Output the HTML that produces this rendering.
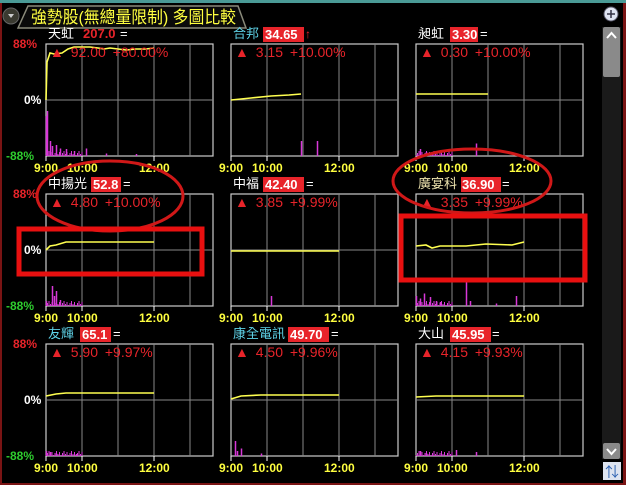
<!DOCTYPE html>
<html><head><meta charset="utf-8"><style>
html,body{margin:0;padding:0;background:#000;width:626px;height:485px;overflow:hidden}
svg{display:block}
text{font-family:"Liberation Sans","Noto Sans CJK TC",sans-serif}
.n{font-size:13px;fill:#fff}
.c{fill:#5fd3e8}
.p{font-size:13px;font-weight:bold;fill:#fff}
.ch{font-size:14px;fill:#e8242a;word-spacing:3px}
.ax{font-size:12px;font-weight:bold}
.t{font-size:12px;font-weight:bold;fill:#ffff40}
</style></head><body>
<svg id="s" width="626" height="485" viewBox="0 0 626 485">
<rect x="0" y="0" width="626" height="485" fill="#000"/>
<rect x="0" y="0" width="626" height="3" fill="#4a9a96"/>
<rect x="0" y="3" width="2" height="482" fill="#7a1414"/>
<rect x="623" y="3" width="3" height="482" fill="#7a1414"/>
<rect x="0" y="483" width="626" height="2" fill="#7a1414"/>
<path d="M18 28 L28 6 L238 6 L246 28 Z" fill="#0a0a0a" stroke="#8a8a7a" stroke-width="1.5"/>
<circle cx="11" cy="16" r="8" fill="#3a3a30" stroke="#666"/>
<path d="M8 14 L14 14 L11 18 Z" fill="#ccc"/>
<text x="31" y="23" font-size="17" fill="#ffff40" textLength="205" lengthAdjust="spacingAndGlyphs">強勢股(無總量限制) 多圖比較</text>
<rect x="602" y="27" width="19" height="432" fill="#1a1a1a"/>
<rect x="603" y="27" width="17" height="50" fill="#8a8a8a" rx="2"/>
<path d="M607 38 L611.5 33 L616 38" stroke="#fff" stroke-width="2" fill="none"/>
<rect x="603" y="443" width="17" height="16" fill="#8a8a8a" rx="2"/>
<path d="M607 449 L611.5 454 L616 449" stroke="#fff" stroke-width="2" fill="none"/>
<rect x="603" y="462" width="18" height="18" fill="#dde4f0"/>
<text x="605" y="477" font-size="14" fill="#2a5fb0">⇅</text>
<circle cx="611" cy="14" r="7" fill="#dfe4f2" stroke="#556"/>
<path d="M607 14 H615 M611 10 V18" stroke="#334" stroke-width="1.5"/>
<g id="g"></g>
<g class="ax">
<text x="13" y="48" fill="#e8242a">88%</text><text x="24" y="104" fill="#fff">0%</text><text x="6" y="160" fill="#2ecc2e">-88%</text>
<text x="13" y="198" fill="#e8242a">88%</text><text x="24" y="254" fill="#fff">0%</text><text x="6" y="310" fill="#2ecc2e">-88%</text>
<text x="13" y="348" fill="#e8242a">88%</text><text x="24" y="404" fill="#fff">0%</text><text x="6" y="460" fill="#2ecc2e">-88%</text>
</g>
<text x="48" y="38" class="n">天虹</text><text x="83" y="38" class="p" style="fill:#e8242a">207.0</text><text x="120" y="38" class="n">=</text>
<text x="233" y="38" class="n c">合邦</text><rect x="263" y="27" width="41" height="15" fill="#e8242a"/><text x="265" y="39" class="p">34.65</text><text x="305" y="38" fill="#e8242a" font-size="12">↑</text>
<text x="418" y="38" class="n">昶虹</text><rect x="450" y="27" width="28" height="15" fill="#e8242a"/><text x="452" y="39" class="p">3.30</text><text x="480" y="38" class="n">=</text>
<text x="50" y="57" class="ch">▲ 92.00  +80.00%</text>
<text x="235" y="57" class="ch">▲ 3.15  +10.00%</text>
<text x="420" y="57" class="ch">▲ 0.30  +10.00%</text>
<text x="48" y="188" class="n">中揚光</text><rect x="91" y="177" width="30" height="15" fill="#e8242a"/><text x="93" y="189" class="p">52.8</text><text x="123" y="188" class="n">=</text>
<text x="233" y="188" class="n">中福</text><rect x="263" y="177" width="41" height="15" fill="#e8242a"/><text x="265" y="189" class="p">42.40</text><text x="306" y="188" class="n">=</text>
<text x="418" y="188" class="n" style="fill:#f0e6b0">廣宴科</text><rect x="461" y="177" width="40" height="15" fill="#e8242a"/><text x="462" y="189" class="p">36.90</text><text x="502" y="188" class="n">=</text>
<text x="50" y="207" class="ch">▲ 4.80  +10.00%</text>
<text x="235" y="207" class="ch">▲ 3.85  +9.99%</text>
<text x="420" y="207" class="ch">▲ 3.35  +9.99%</text>
<text x="48" y="338" class="n c">友輝</text><rect x="80" y="327" width="31" height="15" fill="#e8242a"/><text x="82" y="339" class="p">65.1</text><text x="113" y="338" class="n">=</text>
<text x="233" y="338" class="n c">康全電訊</text><rect x="288" y="327" width="41" height="15" fill="#e8242a"/><text x="290" y="339" class="p">49.70</text><text x="331" y="338" class="n">=</text>
<text x="418" y="338" class="n">大山</text><rect x="450" y="327" width="41" height="15" fill="#e8242a"/><text x="452" y="339" class="p">45.95</text><text x="492" y="338" class="n">=</text>
<text x="50" y="357" class="ch">▲ 5.90  +9.97%</text>
<text x="235" y="357" class="ch">▲ 4.50  +9.96%</text>
<text x="420" y="357" class="ch">▲ 4.15  +9.93%</text>
<g class="t">
<text x="34" y="172">9:00</text><text x="67" y="172">10:00</text><text x="139" y="172">12:00</text>
<text x="219" y="172">9:00</text><text x="252" y="172">10:00</text><text x="324" y="172">12:00</text>
<text x="404" y="172">9:00</text><text x="437" y="172">10:00</text><text x="509" y="172">12:00</text>
<text x="34" y="322">9:00</text><text x="67" y="322">10:00</text><text x="139" y="322">12:00</text>
<text x="219" y="322">9:00</text><text x="252" y="322">10:00</text><text x="324" y="322">12:00</text>
<text x="404" y="322">9:00</text><text x="437" y="322">10:00</text><text x="509" y="322">12:00</text>
<text x="34" y="472">9:00</text><text x="67" y="472">10:00</text><text x="139" y="472">12:00</text>
<text x="219" y="472">9:00</text><text x="252" y="472">10:00</text><text x="324" y="472">12:00</text>
<text x="404" y="472">9:00</text><text x="437" y="472">10:00</text><text x="509" y="472">12:00</text>
</g>
<ellipse cx="110" cy="196" rx="73" ry="35" fill="none" stroke="#d01818" stroke-width="3"/>
<rect x="19" y="229" width="183" height="45" fill="none" stroke="#e81010" stroke-width="5"/>
<ellipse cx="472" cy="181" rx="79" ry="32" fill="none" stroke="#d01818" stroke-width="3"/>
<rect x="401" y="216" width="184" height="64" fill="none" stroke="#e81010" stroke-width="5"/>
</svg>
<script>
var g=document.getElementById('g'),h='';
var cols=[46,231,416],rows=[44,194,344];
var lines=[
 [[0,56],[1,18],[3,12],[4,9],[8,10],[16,9],[22,5],[28,3],[44,3],[52,4],[58,5],[64,4],[72,5],[80,6],[90,5],[100,5],[108,4]],
 [[0,56],[20,54],[40,52],[58,51],[70,50]],
 [[0,50],[20,50],[40,50],[60,50],[72,50]],
 [[0,56],[4,52],[10,51],[20,48],[40,48],[108,48]],
 [[0,57],[108,57]],
 [[0,52],[10,51],[16,54],[24,52],[50,52],[70,50],[96,51],[108,48]],
 [[0,52],[10,50],[20,49],[108,49]],
 [[0,55],[10,52],[30,51],[60,51],[108,51]],
 [[0,53],[20,52],[60,52],[108,52]]];
var vols=[
 [[0,80],[1,90],[4,30],[6,20],[10,22],[14,15],[20,14],[28,10],[40,15],[60,5],[90,4]],
 [[70,30],[86,30]],
 [[4,14],[10,8],[60,25]],
 [[0,10],[6,40],[8,20],[10,30],[14,12]],
 [[40,20]],
 [[0,20],[4,15],[8,25],[14,18],[20,10],[24,8],[50,50],[54,10],[80,5],[100,20]],
 [[0,10],[4,8],[10,5],[30,4]],
 [[4,30],[6,10],[10,15],[30,5]],
 [[4,10],[10,6],[40,12],[60,8]]];
var k=0;
rows.forEach(function(y){cols.forEach(function(x){
 h+='<rect x="'+x+'" y="'+y+'" width="167" height="112" fill="none" stroke="#ccc" stroke-width="1.2"/>';
 [36,72,108,144].forEach(function(d){h+='<line x1="'+(x+d)+'" y1="'+y+'" x2="'+(x+d)+'" y2="'+(y+112)+'" stroke="#888" stroke-width="1"/>';});
 h+='<line x1="'+x+'" y1="'+(y+56)+'" x2="'+(x+167)+'" y2="'+(y+56)+'" stroke="#888" stroke-width="1"/>';
 [0,36,108].forEach(function(d){h+='<line x1="'+(x+d)+'" y1="'+(y+112)+'" x2="'+(x+d)+'" y2="'+(y+117)+'" stroke="#fff"/>';});
 vols[k].forEach(function(v){h+='<line x1="'+(x+v[0]+0.5)+'" y1="'+(y+112)+'" x2="'+(x+v[0]+0.5)+'" y2="'+(y+112-v[1]/2)+'" stroke="#d838d8" stroke-width="1.5"/>';});
 for(var i=0;i<30;i++){var vx=x+(k%3==1?0:i*1.5);if(k%3!=1&&i<25)h+='<line x1="'+vx+'" y1="'+(y+112)+'" x2="'+vx+'" y2="'+(y+112-((i*7)%5+1))+'" stroke="#d838d8"/>';}
 h+='<polyline fill="none" stroke="#ffff50" stroke-width="1.6" points="'+lines[k].map(function(p){return (x+p[0])+','+(y+p[1])}).join(' ')+'"/>';
 k++;
});});
g.innerHTML=h;
</script>
</body></html>
